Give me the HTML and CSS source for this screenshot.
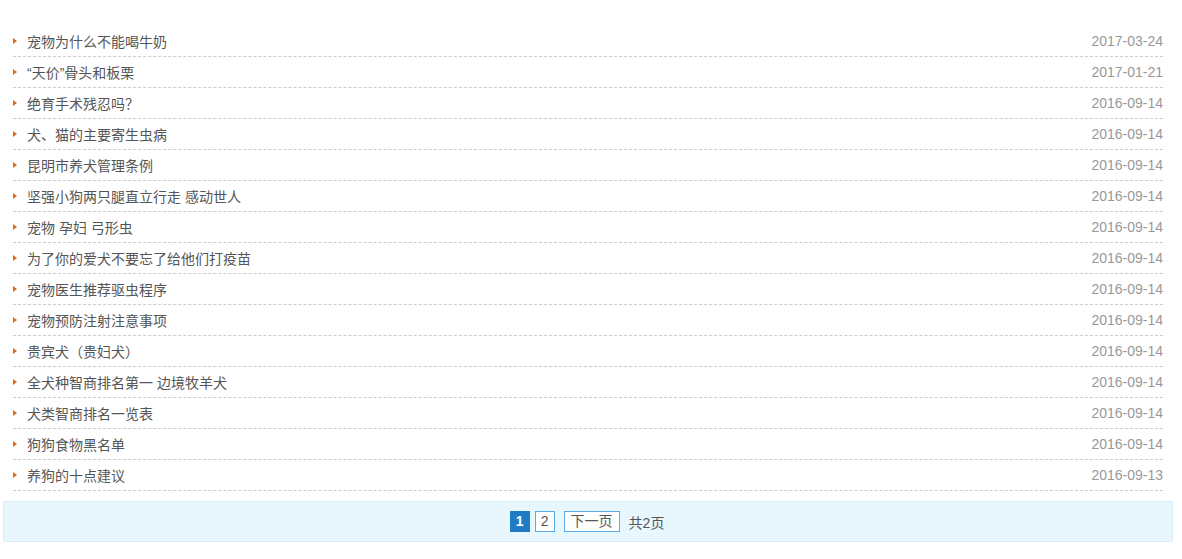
FILE: index.html
```html
<!DOCTYPE html>
<html lang="zh-CN">
<head>
    <meta charset="UTF-8">
    <title>宠物知识</title>
    <link rel="stylesheet" href="styles.css">
</head>
<body>
    <div class="main">
        <ul class="news-list">
            <li><a href="#">宠物为什么不能喝牛奶</a><span class="date">2017-03-24</span></li>
            <li><a href="#">“天价”骨头和板栗</a><span class="date">2017-01-21</span></li>
            <li><a href="#">绝育手术残忍吗？</a><span class="date">2016-09-14</span></li>
            <li><a href="#">犬、猫的主要寄生虫病</a><span class="date">2016-09-14</span></li>
            <li><a href="#">昆明市养犬管理条例</a><span class="date">2016-09-14</span></li>
            <li><a href="#">坚强小狗两只腿直立行走 感动世人</a><span class="date">2016-09-14</span></li>
            <li><a href="#">宠物 孕妇 弓形虫</a><span class="date">2016-09-14</span></li>
            <li><a href="#">为了你的爱犬不要忘了给他们打疫苗</a><span class="date">2016-09-14</span></li>
            <li><a href="#">宠物医生推荐驱虫程序</a><span class="date">2016-09-14</span></li>
            <li><a href="#">宠物预防注射注意事项</a><span class="date">2016-09-14</span></li>
            <li><a href="#">贵宾犬（贵妇犬）</a><span class="date">2016-09-14</span></li>
            <li><a href="#">全犬种智商排名第一 边境牧羊犬</a><span class="date">2016-09-14</span></li>
            <li><a href="#">犬类智商排名一览表</a><span class="date">2016-09-14</span></li>
            <li><a href="#">狗狗食物黑名单</a><span class="date">2016-09-14</span></li>
            <li><a href="#">养狗的十点建议</a><span class="date">2016-09-13</span></li>
        </ul>
        <div class="pager">
            <span class="current">1</span>
            <a href="#">2</a>
            <a href="#" class="next">下一页</a>
            <span class="total">共2页</span>
        </div>
    </div>
</body>
</html>
```

FILE: styles.css
```css
body {
    margin: 0;
    font-family: Arial, "Liberation Sans", "Noto Sans CJK SC", sans-serif;
    font-size: 14px;
    color: #555555;
    background: #ffffff;
}
.main {
    width: 1170px;
    padding: 26px 0 0 3px;
}
.news-list {
    list-style: none;
    margin: 0 10px 0 10px;
    padding: 0;
}
.news-list li {
    display: flex;
    justify-content: space-between;
    align-items: center;
    height: 29px;
    padding-bottom: 1px;
    border-bottom: 1px dashed #cccccc;
    padding-left: 14px;
    position: relative;
}
.news-list li:before {
    content: "";
    position: absolute;
    left: 0;
    top: 12px;
    border-left: 4px solid #e06a17;
    border-top: 3px solid transparent;
    border-bottom: 3px solid transparent;
}
.news-list a {
    color: #555555;
    text-decoration: none;
}
.news-list .date {
    color: #999999;
}
.pager {
    margin-top: 10px;
    height: 39px;
    border: 1px solid #d6eefb;
    background: #e8f6fd;
    display: flex;
    justify-content: center;
    align-items: center;
    gap: 5px;
    padding-right: 2px;
}
.pager a, .pager .current {
    display: inline-block;
    height: 19px;
    line-height: 19px;
    padding: 0 4px;
    min-width: 10px;
    text-align: center;
    border: 1px solid #5aaae8;
    background: #ffffff;
    color: #555555;
    text-decoration: none;
}
.pager a.next {
    padding: 0 6px;
}
.pager .current {
    background: #1f7bc6;
    border-color: #1f7bc6;
    color: #ffffff;
    font-weight: bold;
}
.pager a + a {
    margin-left: 4px;
}
.pager .total {
    margin-left: 4px;
}
```
